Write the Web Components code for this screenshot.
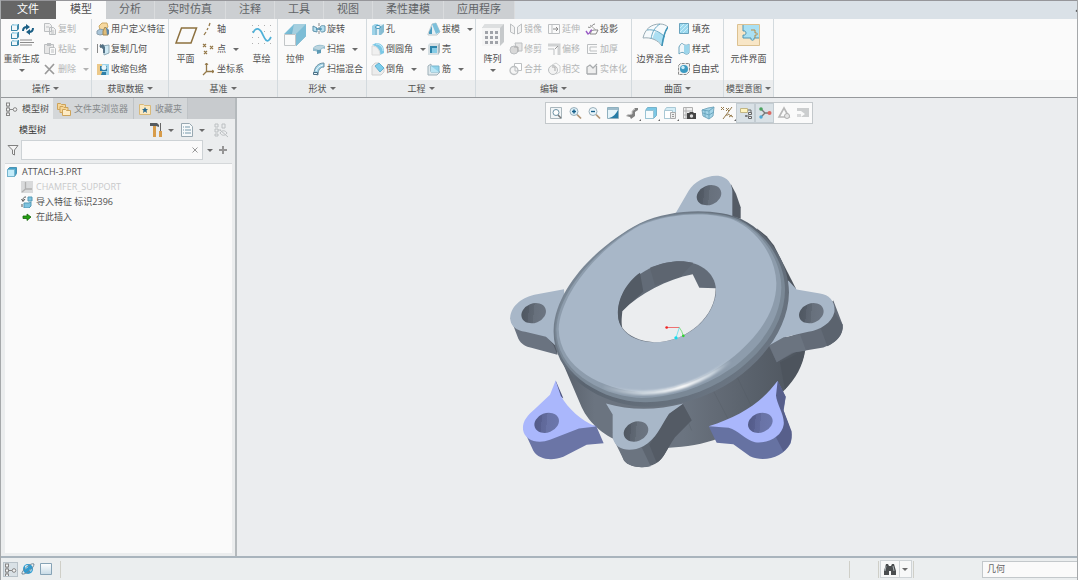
<!DOCTYPE html>
<html lang="zh-CN">
<head>
<meta charset="utf-8">
<meta name="viewport" content="width=device-width, initial-scale=1">
<title>ATTACH-3</title>
<style>
  html, body { margin: 0; height: 100%; }
  body {
    font-family: "Open Sans", "Noto Sans CJK SC", sans-serif;
    font-size: 9px; line-height: 12px; color: #505050; overflow: hidden;
  }
</style>
</head>
<body>
<cad-app></cad-app>
<script>
/* ---------- icon artwork: [width, height, markup] ---------- */
const B = '#6aa3bd', G = '#bcbfc1', T = '#94794a';
const S = (w, h, m) => [w, h, m];
const ICONS = {
  regen: S(24, 24, `<g fill="#3d88aa"><path d="M1 3l2-2h6v5l-2 2H1zM1 11l2-2h6v5l-2 2H1zM1 19l2-2h6v5l-2 1H1z"/></g><g fill="#b9dfee"><path d="M2 2l2-1h4L7 3H2zM2 10l2-1h4l-1 2H2zM2 18l2-1h4l-1 2H2z"/></g><g fill="#f0f7fa"><path d="M2 3h5v4H2zM2 11h5v4H2zM2 19h5v3H2z"/></g><path d="M10 17h12M10 19.500h14M10 22h12" stroke="#8a8a8a"/><path d="M13 8c0-3 1-4 4-4M23 5c0 3-1 4-4 4" fill="none" stroke="#1b5f85" stroke-width="2"/><path d="M16 1l4 3-4 3zM20 12l-4-3 4-3z" fill="#1b5f85"/>`),
  copy: S(14, 14, `<g fill="#f0f0f0" stroke="${G}"><path d="M1.500 1.500h5l2 2v6h-7zM6.500 5.500h4l2 2v5h-6z"/></g><path d="M3 5h3M8 9h3M8 11h3" stroke="${G}"/>`),
  paste: S(14, 14, `<path d="M1.500 2.500h9v9h-9z" fill="#e6e6e6" stroke="${G}"/><path d="M4 1h4v3H4z" fill="${G}"/><path d="M6.500 5.500h5l1 1v6h-6z" fill="#fafafa" stroke="${G}"/><path d="M8 8h3M8 10h3" stroke="${G}"/>`),
  del: S(14, 14, `<path d="M2 3l9 9M11 2L2 12" stroke="#9a9a9a" stroke-width="1.700"/>`),
  udf: S(14, 14, `<path d="M3 4l3-3h5l1 4-3 3H4z" fill="#f7d9a0" stroke="#d0ab66"/><path d="M1 9l3-2 4 1v4l-4 1-3-1z" fill="#a9c5d8" stroke="#8a9fae"/><path d="M9 5l3 3v5H7V9z" fill="#e0bd78" stroke="#a58a55"/><path d="M10 5l3 3v4l-2 1z" fill="#5d86a8"/>`),
  copygeo: S(14, 14, `<path d="M1.500 2v9M4.500 2v4" stroke="#888"/><path d="M6 4l7-1v8l-5 2V8z" fill="#cfe9f4" stroke="#8fa9b5"/><path d="M3 4l4-2 2 3v6H7V7z" fill="#547285"/>`),
  shrink: S(14, 14, `<path d="M1 2h12v11H1z" fill="#9fd4ea"/><path d="M1 2h5v11H1z" fill="#ecc98a"/><path d="M6 10h4v3H5z" fill="#2f80a8"/><path d="M4 4h7v5H4z" fill="#2d7ca4"/><circle cx="8" cy="5.500" r="2.500" fill="#e9f6fb"/>`),
  plane: S(24, 24, `<path d="M7.500 5h15L17 20H2z" fill="none" stroke="#8d713f" stroke-width="1.500"/>`),
  axis: S(14, 14, `<path d="M8 1L7 4M6 6L5 8M4 10l-2 3" stroke="${T}" stroke-width="1.300"/>`),
  points: S(14, 14, `<path d="M1 2l3 3M4 2L1 5M8 4l3 3M11 4L8 7M2 9l3 3M5 9l-3 3" stroke="${T}" stroke-width="1.200"/>`),
  csys: S(14, 14, `<path d="M4.500 1v8.500H12M4.500 9.500L1 13" fill="none" stroke="${T}" stroke-width="1.300"/><path d="M3 3l1.500-2L6 3M10 8l2 1.500L10 11" fill="none" stroke="${T}"/>`),
  sketch: S(24, 24, `<g fill="#b0b0b0"><path d="M2 2h1v1H2zM8 2h1v1H8zM14 2h1v1h-1zM20 2h1v1h-1zM2 8h1v1H2zM14 8h1v1h-1zM20 8h1v1h-1zM2 14h1v1H2zM8 14h1v1H8zM2 20h1v1H2zM8 20h1v1H8zM14 20h1v1h-1zM20 20h1v1h-1z"/></g><path d="M3 10C5 5 9 4 12 10s5 12 9 4" fill="none" stroke="#4db0d8" stroke-width="1.700"/>`),
  extrude: S(24, 24, `<defs><linearGradient id="e" x2="1" y2="1"><stop stop-color="#8ed0e8"/><stop offset="1" stop-color="#3f86a6"/></linearGradient></defs><path d="M1 11L11 1h12v12L13 23V11z" fill="url(#e)"/><path d="M11 1h12v6L13 11H9z" fill="#a5cfdf"/><path d="M13 11L23 1v12L13 23z" fill="#7dbdd6"/><path d="M1.500 11.500h11v11h-11z" fill="#fafafa" stroke="#c2c6c8"/>`),
  revolve: S(14, 14, `<path d="M7 1v12" stroke="#888" stroke-dasharray="3 1"/><path d="M1 4l4 2v4L1 9zM13 4c-4-1-5 0-5 3s2 4 5 2z" fill="#b8e0ef" stroke="#5d91aa"/><path d="M4 7h6" stroke="#2f80a8"/>`),
  sweep: S(14, 14, `<path d="M1 6c3-4 8-4 12-2v3c-3-1-4 0-4 2L5 12C6 9 4 9 1 9z" fill="#93bccd"/><path d="M1 6c4-3 8-3 12-2l-6 4z" fill="#bcd5df"/><path d="M5 8h4v3l-4 1z" fill="#5d9ab5"/>`),
  blend: S(14, 14, `<path d="M2 12C2 5 6 1 12 1v4C8 5 6 8 6 13z" fill="#9fd2e6" stroke="#6a8fa2"/><path d="M1.500 10.500h4v2h-4z" fill="#e9f6fb" stroke="#4a6f85"/><path d="M4 9c1-3 3-5 7-6" stroke="#f4fbfd" fill="none"/>`),
  hole: S(14, 14, `<path d="M1 4l3-2h9v8l-3 3H1z" fill="#e0eff5"/><path d="M1 4l3-2h3v2H4v9H1z" fill="#9ed3e8"/><path d="M5 5v8M9 5v8" stroke="#3790b8"/><ellipse cx="7" cy="5" rx="2.500" ry="1.500" fill="#fff" stroke="#3790b8"/><path d="M10 4l3-2v8l-3 3z" fill="#86bcd2"/>`),
  round: S(14, 14, `<path d="M1 3l4-2c5 0 8 3 8 8v2l-4 2C9 7 6 4 1 3z" fill="#7cc8e6"/><path d="M1 4c5 0 8 4 8 9H1z" fill="#f0f0f0" stroke="#dadada"/><path d="M5 2c4 0 7 3 7 7" fill="none" stroke="#c7ecf8"/>`),
  chamfer: S(14, 14, `<path d="M1 4l3-3h4l5 5v4l-3 3H1z" fill="#ececec" stroke="#d0d0d0"/><path d="M4 4l4-3 5 5-4 4z" fill="#7dcdeb" stroke="#62b2d2"/>`),
  draft: S(14, 14, `<path d="M1 12L5 2l4-1 4 9-3 3H1z" fill="#e5eff3" stroke="#c0cace"/><path d="M5 2l4-1 4 9-4 2z" fill="#7cc0db"/><path d="M2 10l3-6v8H2z" fill="#4a9cc0"/>`),
  shell: S(14, 14, `<path d="M1 3l2-2h10v9l-2 3H1z" fill="#d5dfe3"/><path d="M11 3l2-2v9l-2 3z" fill="#a9b9c0"/><path d="M3 4h7v7H3z" fill="#2f85ab"/><path d="M5 6h5v5H5z" fill="#86cce6"/>`),
  rib: S(14, 14, `<path d="M1 4l3-2v7h7l2 1-3 3H1z" fill="#dfe9ed" stroke="#9fb0b8"/><path d="M4 4h8v6H4z" fill="#8fd2ea" stroke="#7ab5cc"/><path d="M4 4l8 6H4z" fill="#b9e5f4"/>`),
  pattern: S(24, 24, `<path d="M1 5l3-4h19v18l-4 4H1z" fill="#c6c9cb"/><path d="M4 1h19l-4 4H1z" fill="#dddfe0"/><path d="M1 5h18v18H1z" fill="#f5f5f5"/><g fill="#a0a3a9"><path d="M4 8h3v3H4zM9 8h3v3H9zM14 8h3v3h-3zM4 13h3v3H4zM9 13h3v3H9zM14 13h3v3h-3zM4 18h3v3H4zM9 18h3v3H9zM14 18h3v3h-3z"/></g>`),
  mirror: S(14, 14, `<path d="M1.500 2l4 3v7l-4-2zM12.500 2l-4 3v7l4-2z" fill="#f2f2f2" stroke="${G}"/>`),
  trim: S(14, 14, `<path d="M6 1h7v8H8z" fill="#e6e6e6" stroke="${G}"/><circle cx="5" cy="8" r="4" fill="#d8d8d8" stroke="${G}"/><path d="M5 5h4v5" fill="none" stroke="#aaa"/>`),
  merge: S(14, 14, `<path d="M5.500 1.500h7v7h-7z" fill="#fff" stroke="${G}"/><circle cx="5" cy="8.500" r="4" fill="#f5f5f5" stroke="${G}" stroke-width="1.300"/><path d="M6 5v4h3" stroke="${G}"/>`),
  extend: S(14, 14, `<path d="M1.500 2.500h11v9h-11zM5 3v8" fill="none" stroke="${G}"/><path d="M6 7h5M9 5l2 2-2 2" stroke="#888" fill="none"/>`),
  offset: S(14, 14, `<path d="M1 3h11v10" fill="none" stroke="#d0d2d3" stroke-width="3"/><path d="M1 7h6v6" fill="none" stroke="${G}"/><path d="M8 7l3-3" stroke="#999"/>`),
  intersect: S(14, 14, `<circle cx="6" cy="8" r="4.500" fill="#f2f2f2" stroke="${G}"/><path d="M5 3l4-2 4 3v6l-4 2" fill="none" stroke="#d0d2d3"/><path d="M5 5h3v4" stroke="#aaa"/>`),
  project: S(14, 14, `<path d="M3 5c3 2 4-3 7-3M5 12h6l2-4H9c-3 0-3 3-4 4z" fill="none" stroke="#888"/><path d="M1 9l2 3c2 0 2-4 4-4" fill="none" stroke="#9a5cc5" stroke-width="1.400"/><path d="M5 3l6 5" stroke="#aaa"/>`),
  thicken: S(14, 14, `<path d="M12 2.500H2.500v9H12M12 5H5v4h7" fill="none" stroke="${G}"/>`),
  solidify: S(14, 14, `<path d="M2 12V6l3-2 3 3 4-3v8z" fill="#eee"/><path d="M2 12V5l3-2 3 3 4-4M11.500 4v8H2" fill="none" stroke="#a8abad" stroke-width="1.300"/>`),
  boundary: S(26, 24, `<path d="M1 15C3 6 9 1 18 1c3 0 6 1 8 3-3 4-5 11-6 19-4-6-11-9-19-8z" fill="#f6fafc"/><path d="M13 9c5 0 8 3 10 5l-3 9c-2-4-6-7-10-7z" fill="#abdff2"/><path d="M1 15C3 6 9 1 18 1c3 0 6 1 8 3-3 4-5 11-6 19-4-6-11-9-19-8z" fill="none" stroke="#9badb6"/><path d="M18 1c-5 3-8 8-9 15M5 7c7-1 13 2 18 7" fill="none" stroke="#6aa9c4"/><path d="M26 4c-3 4-5 11-6 19" stroke="#3e94b8" stroke-width="1.500"/>`),
  fill: S(14, 14, `<path d="M2.500 1.500h9v10h-9z" fill="#9bd9ef" stroke="${B}"/><path d="M3 6l4-4M3 10l8-8M6 11l5-5" stroke="#cdeef9"/>`),
  style: S(14, 14, `<path d="M2 5c2-4 3-4 4-3s4 2 6 0v9c-2 2-4 1-5 0s-3-1-5 1z" fill="#f0f6f9" stroke="${B}"/><path d="M7 3c2 1 4 0 5-1v9c-2 1-4 1-5 0z" fill="#9bd5eb"/>`),
  freestyle: S(14, 14, `<path d="M1.500 3.500l2-2h9v8l-3 3h-8z" fill="#f0f0f0" stroke="#8a8a8a" stroke-dasharray="3 1"/><circle cx="7" cy="7" r="4" fill="#3c9ac2"/><circle cx="6" cy="5.500" r="1.700" fill="#c9edf9"/>`),
  component: S(24, 24, `<path d="M.5 1.500h22v21H.5z" fill="#f8e6c6" stroke="#dcc190"/><path d="M6 2h16v13h-5c1 3-4 3-3 0H6v-3c4 1 4-5 0-4z" fill="#a9e0f3"/><path d="M6 2v6c4-1 4 5 0 4v3h8c-1 3 4 3 3 0h5" fill="none" stroke="#4f95b3"/><path d="M14 7h4v3c3-1 3 3 0 2v3" fill="none" stroke="#b98d48"/>`),
  tree: S(14, 14, `<path d="M3 4v2M3 9v2M5 7.500h3" stroke="#888"/><g fill="#f4f4f4" stroke="#858585"><rect x="1.500" y="1" width="3" height="3"/><rect x="1.500" y="6" width="3" height="3"/><rect x="1.500" y="11" width="3" height="2.500"/><circle cx="10" cy="7.500" r="1.800"/></g>`),
  folders: S(14, 14, `<g fill="#f6d799" stroke="#cda35a"><path d="M.5 1.500h3l1 1h4v5h-8z"/><path d="M3 4.500h3l1 1h4v5H3z"/><path d="M5.500 7.500h3l1 1h4v5h-8z" fill="#fdebc4"/></g>`),
  fav: S(14, 14, `<path d="M1.500 2.500h4l1 1h6v9h-11z" fill="#fae8c0" stroke="#d8b878"/><path d="M7 5l1 2h2L8.500 8.500 9 11 7 9.500 5 11l.5-2.500L4 7h2z" fill="#2b6a91"/>`),
  tools: S(14, 16, `<path d="M4 4h3v11H4z" fill="#d79c4a"/><path d="M1 1h7l2 2v2L7 4H1z" fill="#555b60"/><path d="M11 1h1v8h-1z" fill="#666"/><path d="M10 9h3v6h-3z" fill="#d79c4a"/>`),
  list: S(14, 16, `<path d="M1.500 1.500h8l3 3v10h-11z" fill="#f6f9fa" stroke="#98a8b1"/><path d="M3 5h1M5 5h5M3 8h1M5 8h6M3 11h1M5 11h6" stroke="#7799ab"/>`),
  treeoff: S(16, 16, `<g fill="none" stroke="#bcc0c2"><path d="M2 2h3v3H2zM2 7h3v3H2zM2 12h3v2H2zM5 8h3M9 2h3v4H9z"/><path d="M7 11c2-3 5-3 7 0-2 3-5 3-7 0zM7 8l8 7"/></g>`),
  funnel: S(14, 14, `<path d="M2 2.500h10L8.500 7v5l-2-1V7z" fill="#f4f4f4" stroke="#808080"/>`),
  plus: S(10, 10, `<path d="M5 1v8M1 5h8" stroke="#959595" stroke-width="2"/>`),
  clear: S(8, 8, `<path d="M1.500 1.500l5 5M6.500 1.500l-5 5" stroke="#999"/>`),
  part: S(12, 12, `<path d="M1.500 3.500l2-2h7v6l-2 3h-7z" fill="#43a3cb" stroke="#4b93b3"/><path d="M1.500 3.500h7v7h-7z" fill="#c3ecfa" stroke="#77b5ce"/>`),
  csysoff: S(12, 12, `<path d="M0 0h12v12H0z" fill="#d9dadb"/><path d="M4.500 1v7H11M4.500 8L1 11" fill="none" stroke="#b0b0b0" stroke-width="1.300"/>`),
  import: S(12, 12, `<path d="M7 1h4v4H7zM3 7h5l2-1v4l-2 2H3z" fill="#7fc4e0" stroke="#5599b5"/><path d="M5 1C2 1 2 3 2 5M.5 3L2 5.500 4 3M1 8v3" fill="none" stroke="#555"/>`),
  insert: S(12, 12, `<path d="M2 5h4V3l4 3-4 3.500V7.500H2z" fill="#22a012" stroke="#17660d" stroke-width=".8"/>`),
  zfit: S(14, 14, `<path d="M1.500 1.500h11v11h-11z" fill="#f1f5f7" stroke="#a9b6bc"/><circle cx="7" cy="6.500" r="3" fill="#fff" stroke="#6d93a5"/><path d="M9 9l3 3" stroke="#777" stroke-width="1.500"/>`),
  zin: S(14, 14, `<path d="M9 8.500l4 4" stroke="#b09272" stroke-width="1.700"/><circle cx="6" cy="5.500" r="4" fill="#dff0f8" stroke="#9ab0bb"/><path d="M4 5.500h4M6 3.500v4" stroke="#155f8a" stroke-width="1.500"/>`),
  zout: S(14, 14, `<path d="M9 8.500l4 4" stroke="#b09272" stroke-width="1.700"/><circle cx="6" cy="5.500" r="4" fill="#eaf5fa" stroke="#9ab0bb"/><path d="M4 5.500h4" stroke="#155f8a" stroke-width="1.400"/>`),
  repaint: S(14, 14, `<path d="M1.500 1.500h11v11h-11z" fill="#e5f4fa" stroke="#8fb0bf"/><path d="M2 2h10v2H2z" fill="#9ebccb"/><path d="M12 4v8H3c4-1 7-4 9-8z" fill="#267ca6"/>`),
  spin: S(14, 14, `<path d="M1 10l3-2h3V5l3-3h3v2l-3 2v4l-4 3-1-2z" fill="#808080"/><path d="M2 9l5-1V5l3-2" stroke="#ccc" fill="none"/>`),
  shaded: S(14, 14, `<path d="M1.500 4.500l2-3h9v8l-3 3h-8z" fill="#7cc8e6" stroke="#75b2ca"/><path d="M1.500 4.500h8v8h-8z" fill="#f5fbfd" stroke="#98c3d4"/>`),
  views: S(14, 14, `<path d="M1.500 4.500l2-3h9v8l-3 3h-8z" fill="#d4edf6" stroke="#a9c8d5"/><path d="M1.500 4.500h8v8h-8z" fill="#fff" stroke="#a9c8d5"/><path d="M7.500 6.500h5v6h-5z" fill="#eee" stroke="#aaa"/><path d="M9 8.500h2M9 10.500h2" stroke="#999"/>`),
  camera: S(14, 14, `<path d="M1.500 1.500h9v11h-9zM4 1v12M1 5h10M1 9h10" fill="#f0f0f0" stroke="#b0b0b0"/><path d="M5 7h2l1-1h3l1 1h2v6H5z" fill="#444"/><circle cx="9.500" cy="10" r="1.700" fill="#ddd"/>`),
  persp: S(14, 14, `<path d="M1 4l6-2 6-1-1 9-4 3-6-3z" fill="#a5d5e8" stroke="#7aa9be"/><path d="M1 4l7 1 5-4M8 5v8M4 4v7M2 7l6 2 5-3" stroke="#6ba7c0" fill="none"/>`),
  datum: S(14, 14, `<path d="M1 1l3 3M4 1L1 4M6 2l3 3M9 2L6 5M12 1L3 13M6 9h2M8 8l5 3M9 11l3-2" stroke="${T}"/>`),
  annot: S(14, 14, `<path d="M1.500 2.500h7v4h-7z" fill="#fff4bd" stroke="#c2b684"/><path d="M9 4h3v3M7 10h3" stroke="#666" fill="none"/><path d="M9.500 6.500h3v2h-3zM9.500 10.500h3v2h-3zM6.500 9.500h1v1h-1z" fill="#eee" stroke="#666"/>`),
  spincenter: S(14, 14, `<path d="M3 3l4 4h5M7 7l-4 4" stroke="#777" fill="none" stroke-width="1.300"/><circle cx="3" cy="3" r="1.800" fill="#4aa35e"/><circle cx="11.500" cy="7" r="2" fill="#dc6862"/><circle cx="3" cy="11" r="1.700" fill="#4fa8d4"/>`),
  tri: S(14, 14, `<path d="M7 2l5 9H2z" fill="none" stroke="#b8b8b8" stroke-width="1.600"/><circle cx="10" cy="10" r="2.500" fill="#e6e6e6" stroke="#b0b0b0"/>`),
  pause: S(14, 14, `<path d="M1 2h12v9H5l4-3-4-3H1z" fill="#cccecf"/><path d="M1 8h4v3H1z" fill="#d8d9da"/>`),
  globe: S(14, 14, `<circle cx="7" cy="7" r="5" fill="#2f9bd0"/><path d="M4 4c2-2 4-1 3 1s-3 1-3 3zM8 8l3-1-1 3z" fill="#c9ecf8"/><path d="M1 12C0 9 10 0 13 2c0 4-8 11-12 10z" fill="none" stroke="#71899a"/>`),
  window: S(14, 14, `<defs><linearGradient id="w" x2="0" y2="1"><stop stop-color="#fff"/><stop offset="1" stop-color="#c6dae6"/></linearGradient></defs><path d="M1.500 1.500h11v11h-11z" fill="url(#w)" stroke="#86a3b6"/>`),
  binoc: S(14, 14, `<path d="M3 2h2l1 2h2l1-2h2l2 7v4H8v-4H6v4H1V9z" fill="#4a4d4f"/><path d="M3 4L2 9M10 4l1 5" stroke="#a8b0b4"/>`),
  collapse: S(6, 6, `<path d="M1 4.500L4 1.500l3 3" stroke="#555" stroke-width="1.500"/>`)
};

const el = (name, css, html) => customElements.define(name, class extends HTMLElement {
  constructor() {
    super();
    this.attachShadow({ mode: 'open' });
  }
  connectedCallback() {
    const t = document.createElement('template');
    const a = n => this.getAttribute(n) || '';
    t.innerHTML = `<style>*{box-sizing:border-box}button{font:inherit;color:inherit;border:0;background:none;padding:0;margin:0;white-space:nowrap}${css}</style>` + (typeof html === 'function' ? html(a, this) : html);
    this.shadowRoot.replaceChildren(t.content.cloneNode(true));
  }
});

el('cad-icon', ':host{display:block;flex:none}svg{display:block}', a => {
  const [w, h, m] = ICONS[a('name')];
  return `<svg width="${w}" height="${h}" viewBox="0 0 ${w} ${h}" fill="none" aria-hidden="true">${m}</svg>`;
});

el('cad-caret', ':host{display:block;flex:none;width:0;border:3px solid transparent;border-top:3px solid #6a6a6a;border-bottom:0}', '');

el('ribbon-tab', `:host{display:block}
  button{height:100%;width:100%;font-size:11px;line-height:16px;padding:0 13px 2px;color:#606366;background:#cccfd2;border-right:1px solid #d9dbdd}
  :host([active]) button{background:#fafafa;color:#505050;padding:0 14px 2px;border:0}
  :host([file]) button{background:#666;color:#fff;padding:0 17px 2px;border:0}`,
  '<button type="button"><slot></slot></button>');

el('ribbon-button', `:host{display:block;height:20px}
  button{display:flex;align-items:center;gap:1px;height:100%}
  cad-caret{margin-left:6px}
  :host([disabled]) button{color:#b3b5b6}
  :host([disabled]) cad-caret{opacity:.5}`,
  (a, n) => `<button type="button" ${n.hasAttribute('disabled') ? 'disabled' : ''}><cad-icon name="${a('icon')}"></cad-icon><slot></slot>${n.hasAttribute('menu') ? '<cad-caret></cad-caret>' : ''}</button>`);

el('ribbon-large', `:host{display:block}
  button{display:flex;flex-direction:column;align-items:center;width:100%;padding-top:4px}
  span{padding:6px 0 4px}`,
  (a, n) => `<button type="button"><cad-icon name="${a('icon')}"></cad-icon><span><slot></slot></span>${n.hasAttribute('menu') ? '<cad-caret></cad-caret>' : ''}</button>`);

el('ribbon-group', `:host{display:flex;flex-direction:column;border-right:1px solid #d3dade;flex:none}
  .body{display:grid;grid-template-columns:var(--cols);height:61px;align-items:start}
  .name{display:flex;align-items:center;justify-content:center;gap:3px;height:17px;width:100%;background:#ebedee}`,
  a => `<div class="body"><slot></slot></div><button type="button" class="name">${a('name')}<cad-caret></cad-caret></button>`);

el('cad-ribbon', `:host{display:block;border-top:1px solid #96969a;border-bottom:1px solid #96999c;background:#fafafa}
  nav{display:flex;height:18px;background:#dae1e7}
  .min{margin-left:auto;width:3px;overflow:hidden}
  .groups{display:flex;height:78px}
  .inset{padding-left:4px}
  .rest{flex:1;display:flex;align-items:flex-end}
  .rest::after{content:"";height:17px;flex:1;background:#f7f8f8}`,
  `<nav><ribbon-tab file>文件</ribbon-tab><ribbon-tab active>模型</ribbon-tab><ribbon-tab>分析</ribbon-tab><ribbon-tab>实时仿真</ribbon-tab><ribbon-tab>注释</ribbon-tab><ribbon-tab>工具</ribbon-tab><ribbon-tab>视图</ribbon-tab><ribbon-tab>柔性建模</ribbon-tab><ribbon-tab>应用程序</ribbon-tab><button type="button" class="min" aria-label="最小化功能区"><cad-icon name="collapse"></cad-icon></button></nav>
  <div class="groups">
   <ribbon-group name="操作" style="--cols:43px 48px"><ribbon-large icon="regen" menu>重新生成</ribbon-large>
    <div><ribbon-button icon="copy" disabled>复制</ribbon-button><ribbon-button icon="paste" disabled menu>粘贴</ribbon-button><ribbon-button icon="del" disabled menu>删除</ribbon-button></div></ribbon-group>
   <ribbon-group name="获取数据" style="--cols:76px"><div class="inset"><ribbon-button icon="udf">用户定义特征</ribbon-button><ribbon-button icon="copygeo">复制几何</ribbon-button><ribbon-button icon="shrink">收缩包络</ribbon-button></div></ribbon-group>
   <ribbon-group name="基准" style="--cols:33px 44px 31px"><ribbon-large icon="plane">平面</ribbon-large>
    <div><ribbon-button icon="axis">轴</ribbon-button><ribbon-button icon="points" menu>点</ribbon-button><ribbon-button icon="csys">坐标系</ribbon-button></div><ribbon-large icon="sketch">草绘</ribbon-large></ribbon-group>
   <ribbon-group name="形状" style="--cols:34px 54px"><ribbon-large icon="extrude">拉伸</ribbon-large>
    <div><ribbon-button icon="revolve">旋转</ribbon-button><ribbon-button icon="sweep" menu>扫描</ribbon-button><ribbon-button icon="blend">扫描混合</ribbon-button></div></ribbon-group>
   <ribbon-group name="工程" style="--cols:60px 48px"><div class="inset"><ribbon-button icon="hole">孔</ribbon-button><ribbon-button icon="round" menu>倒圆角</ribbon-button><ribbon-button icon="chamfer" menu>倒角</ribbon-button></div>
    <div><ribbon-button icon="draft" menu>拔模</ribbon-button><ribbon-button icon="shell">壳</ribbon-button><ribbon-button icon="rib" menu>筋</ribbon-button></div></ribbon-group>
   <ribbon-group name="编辑" style="--cols:33px 38px 38px 46px"><ribbon-large icon="pattern" menu>阵列</ribbon-large>
    <div><ribbon-button icon="mirror" disabled>镜像</ribbon-button><ribbon-button icon="trim" disabled>修剪</ribbon-button><ribbon-button icon="merge" disabled>合并</ribbon-button></div>
    <div><ribbon-button icon="extend" disabled>延伸</ribbon-button><ribbon-button icon="offset" disabled>偏移</ribbon-button><ribbon-button icon="intersect" disabled>相交</ribbon-button></div>
    <div><ribbon-button icon="project">投影</ribbon-button><ribbon-button icon="thicken" disabled>加厚</ribbon-button><ribbon-button icon="solidify" disabled>实体化</ribbon-button></div></ribbon-group>
   <ribbon-group name="曲面" style="--cols:45px 46px"><ribbon-large icon="boundary">边界混合</ribbon-large>
    <div><ribbon-button icon="fill">填充</ribbon-button><ribbon-button icon="style">样式</ribbon-button><ribbon-button icon="freestyle">自由式</ribbon-button></div></ribbon-group>
   <ribbon-group name="模型意图" style="--cols:49px"><ribbon-large icon="component">元件界面</ribbon-large></ribbon-group>
   <div class="rest"></div>
  </div>`);

el('panel-tab', `:host{display:block}
  button{display:flex;align-items:center;gap:3px;height:100%;padding:0 5px 0 4px;color:#85888a;background:#d4d7d9;border-right:1px solid #bfc3c6}
  :host([active]) button{background:#ebedee;color:#505050;padding-right:4px;border:0}`,
  a => `<button type="button"><cad-icon name="${a('icon')}"></cad-icon><slot></slot></button>`);

el('tree-item', `:host{display:block}
  button{display:flex;align-items:center;gap:4px;height:15px;padding-left:1px}
  :host([child]) button{padding-left:16px;gap:3px}
  :host([off]) button{color:#c8c9ca}`,
  a => `<button type="button"><cad-icon name="${a('icon')}"></cad-icon><slot></slot></button>`);

el('model-tree', `:host{display:flex;flex-direction:column;background:#ebedee;border-left:1px solid #9c9fa1;border-right:2px solid #b4b9bc}
  nav{display:flex;height:21px;background:#c8cbce}
  header{display:flex;align-items:center;height:22px;padding:0 6px 0 18px;color:#333}
  h2{font:inherit;margin:0;flex:1}
  header button+button{margin-left:6px}
  .drop{display:flex;align-items:center;gap:5px}
  header button:last-child{margin-left:8px}
  form{display:flex;align-items:center;height:18px;padding-left:5px;gap:1px;margin:0}
  .field{display:flex;align-items:center;flex:1;height:20px;background:#fafafa;border:1px solid #cdd2d5;padding-right:3px}
  input{flex:1;min-width:0;border:0;outline:0;background:none;font:inherit}
  .caret{padding:0 4px 0 3px}
  .add{margin-right:7px}
  .tree{flex:1;margin:4px 3px 3px 4px;background:#fafafa;border-top:1px solid #d5d8da}`,
  `<nav><panel-tab icon="tree" active>模型树</panel-tab><panel-tab icon="folders">文件夹浏览器</panel-tab><panel-tab icon="fav">收藏夹</panel-tab></nav>
  <header><h2>模型树</h2><button type="button" class="drop" aria-label="设置"><cad-icon name="tools"></cad-icon><cad-caret></cad-caret></button><button type="button" class="drop" aria-label="显示"><cad-icon name="list"></cad-icon><cad-caret></cad-caret></button><button type="button" aria-label="隐藏"><cad-icon name="treeoff"></cad-icon></button></header>
  <form><cad-icon name="funnel"></cad-icon><div class="field"><input type="text" aria-label="过滤"><button type="button" aria-label="清除"><cad-icon name="clear"></cad-icon></button></div><button type="button" class="caret" aria-label="选项"><cad-caret></cad-caret></button><button type="button" class="add" aria-label="添加"><cad-icon name="plus"></cad-icon></button></form>
  <div class="tree"><tree-item icon="part">ATTACH-3.PRT</tree-item><tree-item icon="csysoff" child off>CHAMFER_SUPPORT</tree-item><tree-item icon="import" child>导入特征 标识2396</tree-item><tree-item icon="insert" child>在此插入</tree-item></div>`);

el('tool-button', `:host{display:block}
  button{position:relative;display:flex;align-items:center;justify-content:center;width:19px;height:20px}
  :host([pressed]) button{background:#d9e1e6;border:1px solid #c3ccd2}
  :host([menu]) button::after{content:"";position:absolute;right:0;bottom:2px;border:1px solid #666;border-left-color:transparent;border-top-color:transparent}`,
  a => `<button type="button" aria-label="${a('icon')}"><cad-icon name="${a('icon')}"></cad-icon></button>`);

el('view-toolbar', ':host{display:flex;background:#fafafa;border:1px solid #c3c8cb}',
  `<tool-button icon="zfit"></tool-button><tool-button icon="zin"></tool-button><tool-button icon="zout"></tool-button><tool-button icon="repaint"></tool-button><tool-button icon="spin" menu></tool-button><tool-button icon="shaded" menu></tool-button><tool-button icon="views" menu></tool-button><tool-button icon="camera"></tool-button><tool-button icon="persp"></tool-button><tool-button icon="datum" menu></tool-button><tool-button icon="annot" pressed></tool-button><tool-button icon="spincenter" pressed></tool-button><tool-button icon="tri"></tool-button><tool-button icon="pause"></tool-button>`);

/* the part is drawn at three times its size and scaled down */
const bore = (x, y, fill = 'bore') => `<ellipse cx="${x}" cy="${y}" rx="38" ry="29" transform="rotate(-22 ${x} ${y})" fill="url(#${fill})"/>`;
el('model-view', `:host{display:block;position:relative;overflow:hidden;background:#ebedef}
  svg{display:block;width:100%;height:100%}
  view-toolbar{position:absolute;top:4px;left:308px}`,
  `<svg viewBox="0 0 841 457" role="img" aria-label="ATTACH-3">
  <defs>
   <linearGradient id="wall" gradientUnits="userSpaceOnUse" x1="200" y1="0" x2="900" y2="0"><stop stop-color="#5b636e"/><stop offset=".12" stop-color="#6b7480"/><stop offset=".5" stop-color="#6b7480"/><stop offset=".62" stop-color="#646c77"/><stop offset=".8" stop-color="#59616b"/><stop offset="1" stop-color="#4e555e"/></linearGradient>
   <linearGradient id="rim" gradientUnits="userSpaceOnUse" x1="300" y1="150" x2="760" y2="640"><stop stop-color="#8593a2"/><stop offset=".5" stop-color="#5a6470"/><stop offset="1" stop-color="#6c7784"/></linearGradient>
   <linearGradient id="bore" x1="0" y1=".3" x2="1" y2=".7"><stop stop-color="#4f5761"/><stop offset=".3" stop-color="#545c67"/><stop offset=".3" stop-color="#5b636f"/><stop offset=".5" stop-color="#5f6873"/><stop offset=".5" stop-color="#67707c"/><stop offset="1" stop-color="#6c7582"/></linearGradient>
   <linearGradient id="bluebore" x1="0" y1=".3" x2="1" y2=".7"><stop stop-color="#535b88"/><stop offset=".3" stop-color="#586090"/><stop offset=".3" stop-color="#5f6899"/><stop offset=".5" stop-color="#626b9d"/><stop offset=".5" stop-color="#6973a6"/><stop offset="1" stop-color="#6c77ac"/></linearGradient>
   <linearGradient id="shine" gradientUnits="userSpaceOnUse" x1="300" y1="0" x2="700" y2="0"><stop stop-color="#cfd9e2" stop-opacity="0"/><stop offset=".35" stop-color="#d3dce4"/><stop offset=".62" stop-color="#fff"/><stop offset=".85" stop-color="#c9d4de"/><stop offset="1" stop-color="#b0bfcd" stop-opacity="0"/></linearGradient>
   <filter id="soft"><feGaussianBlur stdDeviation="3"/></filter>
  </defs>
  <g transform="translate(263 67) scale(.333333)">
   <path d="M692 55l16 30 14 40v35l-28-8z" fill="#545b65"/>
   <path d="M526 145L566 76C582 48 622 28 655 31C683 34 697 57 697 78V160z" fill="#a8b7c8"/>
   ${bore(627, 89)}
   <path d="M31 457L55 520C64 537 78 544 94 547L172 568L165 520L130 490z" fill="#6a7380"/>
   <path d="M140 514L160 538L172 568V520z" fill="#545b65"/>
   <path d="M192 371L103 388C62 397 28 427 31 463C34 490 60 497 85 501L138 514L166 540L200 480z" fill="#a8b7c8"/>
   ${bore(101, 443)}
   <path d="M166 540L245 725C268 775 320 818 370 830C430 850 540 856 640 824C740 790 800 735 855 672C890 630 910 590 915 555L800 470z" fill="url(#wall)"/>
   <path d="M822 540l55 80M700 610l60 125M632 660l52 100M545 720l30 75" stroke="#50575f" stroke-width="2" opacity=".4"/>
   <path d="M840 590L915 555C910 600 885 642 855 672z" fill="#4d545d"/>
   <path d="M770 188L800 212L822 240L888 370L860 385z" fill="#4d545d"/>
   <path d="M1000 405L1028 478C1032 510 1005 535 970 546L885 560L830 590L806 540L900 500z" fill="#636b77"/>
   <path d="M849 516L900 506L918 555L876 562L830 590L808 540z" fill="#6b7480"/>
   <path d="M960 482L1003 440L1028 478C1031 505 1010 530 982 542z" fill="#5b636e"/>
   <path d="M865 345L890 372L960 384C990 388 1007 410 1003 440C996 472 960 493 925 499L850 516L806 541L780 520z" fill="#a8b7c8"/>
   ${bore(934, 443)}
   <path d="M161 490C166 370 290 240 420 173C520 128 650 128 725 161C805 200 866 290 867 380C866 480 800 575 700 645C610 705 500 733 400 721C280 705 155 620 161 490z" fill="url(#rim)"/>
   <path d="M165 490C170 375 290 243 420 175C520 133 650 134 715 161C795 200 854 285 855 372C855 470 790 562 695 628C605 690 500 716 405 709C285 695 162 615 165 490z" fill="#7a8896"/>
   <path d="M169 490C174 380 290 246 420 177C520 136 645 138 708 163C785 197 843 280 844 366C843 460 782 547 692 610C602 672 500 700 410 697C292 686 167 610 169 490z" fill="#8d9cac"/>
   <path d="M176 490C180 390 290 250 420 180C520 138 640 141 700 163C770 193 826 270 829 352C830 440 770 520 690 582C600 650 500 680 420 680C310 672 178 610 176 490z" fill="#a8b7c8"/>
   <path d="M310 664C430 700 560 685 690 588" fill="none" stroke="url(#shine)" stroke-width="12" filter="url(#soft)"/>
   <path d="M354 450C350 360 440 290 535 287C610 287 650 330 648 380C640 460 560 530 460 530C400 528 358 500 354 450z" fill="#626b77"/>
   <path d="M354 450C351 400 380 350 420 322L430 378L367 437V487C358 475 355 465 354 450z" fill="#535b65"/>
   <path d="M450 307C500 286 545 283 580 292L540 335L465 360z" fill="#5d6570"/>
   <path d="M367 487C363 470 366 450 367 437C420 382 500 342 578 326L598 367L647 368C648 450 565 530 462 530C420 528 385 512 367 487z" fill="#ebedef"/>
   <path d="M338 800L372 885C390 907 435 912 466 895C492 880 502 850 520 817L575 764L548 715L480 760z" fill="#5d6570"/>
   <path d="M338 815L372 885C385 904 425 909 452 902L425 845z" fill="#6b7480"/>
   <path d="M507 745L548 715L575 764L525 815C500 850 495 875 470 892L448 838z" fill="#545b65"/>
   <path d="M318 714C390 735 470 735 550 714L507 745C480 785 470 820 430 842C390 862 345 854 338 815V747z" fill="#a8b7c8"/>
   ${bore(408, 798)}
   <path d="M167 645L190 698L172 690z" fill="#4d547e"/>
   <path d="M69 788L100 856C115 882 155 888 190 874L260 838L311 833L288 780L180 790z" fill="#6b75a6"/>
   <path d="M167 645L182 690C205 730 242 765 288 783L237 789L150 823C112 837 73 824 69 792C67 765 85 748 103 732L150 688z" fill="#aab7fc"/>
   ${bore(140, 772, 'bluebore')}
   <path d="M626 782L650 832L700 836L750 872C792 892 850 875 872 833C882 802 855 756 851 735L857 694L833 646L800 790z" fill="#6672a2"/>
   <path d="M833 646L857 694L850 733L875 798C878 825 868 843 850 858L828 815L850 770L820 710z" fill="#575f8b"/>
   <path d="M833 646L828 690C830 715 855 750 851 778C846 810 810 835 765 830C735 824 715 794 686 787L626 782C720 752 786 710 833 646z" fill="#aab7fc"/>
   ${bore(781, 772, 'bluebore')}
   <path d="M500 486h38" stroke="#f03030" stroke-width="2"/><path d="M538 486q8 10 12 25" stroke="#50d850" stroke-width="2" fill="none"/><path d="M538 486l-10 31" stroke="#45dce8" stroke-width="2"/>
   <circle cx="500" cy="486" r="4" fill="#f02020"/><circle cx="550" cy="511" r="4" fill="#30d030"/><circle cx="528" cy="517" r="5" fill="#10dcec"/>
  </g></svg><view-toolbar></view-toolbar>`);

el('status-bar', `:host{display:flex;align-items:center;height:24px;background:#ebeeef;border-top:2px solid #a9b4bd;padding-left:3px}
  .on{background:#d9e1e6;border:1px solid #b8c2c9;width:15px;height:15px;overflow:hidden;margin-right:1px}
  .b{padding:0 2px}
  i{align-self:stretch;width:1px;margin:3px 0 2px;background:#cfcfc8}
  .s{margin-left:5px}
  .end{margin-left:auto}
  .gap{margin-left:28px}
  .find{display:flex;align-items:center;height:18px;border:1px solid #cfd4d7;background:#f7f8f8;margin:0 1px}
  .find cad-icon{padding:0 2px}
  .find button{display:flex;align-items:center;height:100%}
  .find .dd{padding:0 3px 0 2px;border-left:1px solid #cfd4d7}
  select{appearance:none;width:96px;height:17px;margin:0 0 0 68px;border:1px solid #c3c8cb;border-right:0;border-radius:0;background:#fafafa;font:inherit;color:#666;padding:0 4px}`,
  `<button type="button" class="on" aria-label="模型树"><cad-icon name="tree"></cad-icon></button><button type="button" class="b" aria-label="浏览器"><cad-icon name="globe"></cad-icon></button><button type="button" class="b" aria-label="全屏"><cad-icon name="window"></cad-icon></button><i class="s"></i>
  <i class="end"></i><i class="gap"></i><div class="find"><button type="button" aria-label="查找"><cad-icon name="binoc"></cad-icon></button><button type="button" class="dd" aria-label="查找选项"><cad-caret></cad-caret></button></div><i></i>
  <select aria-label="选择过滤器"><option>几何</option></select>`);

el('cad-app', `:host{display:grid;grid-template-rows:auto 1fr auto;height:100vh;position:relative}
  :host::after{content:"";position:absolute;inset:0;border:solid #a5a8aa;border-width:0 1px;pointer-events:none}
  main{display:grid;grid-template-columns:237px 1fr;min-height:0}`,
  '<cad-ribbon></cad-ribbon><main><model-tree></model-tree><model-view></model-view></main><status-bar></status-bar>');
</script>
</body>
</html>
